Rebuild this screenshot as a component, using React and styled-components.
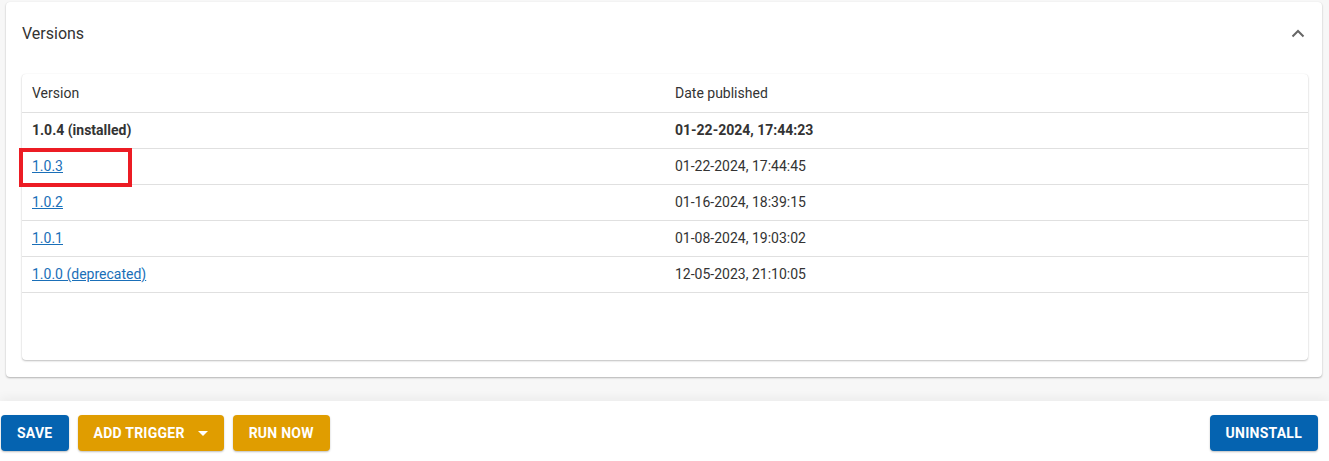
import React from 'react'
import styled, { createGlobalStyle } from 'styled-components'

const GlobalStyle = createGlobalStyle`
  html, body {
    margin: 0;
    padding: 0;
    background: #f7f7f7;
    font-family: Roboto, "Liberation Sans", Arial, sans-serif;
  }
`

const Page = styled.div`
  display: flex;
  flex-direction: column;
  width: 1329px;
  height: 461px;
  overflow: hidden;
`

const Content = styled.div`
  padding: 2px 7px 0 6px;
  height: 401px;
  flex-shrink: 0;
  box-sizing: border-box;
`

const Panel = styled.section`
  background: #fff;
  border-radius: 4px;
  box-shadow: 0 1px 2px rgba(0, 0, 0, 0.28), 0 0 1px rgba(0, 0, 0, 0.06);
  padding: 0 14px 17px 16px;
`

const PanelHeader = styled.div`
  display: flex;
  align-items: center;
  justify-content: space-between;
  height: 62px;
  padding-top: 1px;
  box-sizing: border-box;
`

const PanelTitle = styled.h2`
  margin: 0;
  font-size: 16px;
  font-weight: 400;
  color: #333;
`

const Collapse = styled.button`
  display: flex;
  align-items: center;
  justify-content: center;
  width: 24px;
  height: 24px;
  padding: 0;
  margin-right: -2px;
  border: 0;
  background: none;
  color: #666;
`

const TableCard = styled.div`
  margin-top: 10px;
  height: 286px;
  background: #fff;
  border-radius: 4px;
  box-shadow: 0 1px 2px rgba(0, 0, 0, 0.25), 0 0 1px rgba(0, 0, 0, 0.08);
`

const Table = styled.table`
  width: 100%;
  border-collapse: collapse;
  table-layout: fixed;
  font-size: 14px;
  color: #333;
`

const Th = styled.th`
  height: 38px;
  padding: 0 10px;
  text-align: left;
  font-weight: 400;
  border-bottom: 1px solid #e0e0e0;
  box-sizing: border-box;
`

const Td = styled.td`
  position: relative;
  height: 36px;
  padding: 0 10px;
  font-weight: ${({ $bold }) => ($bold ? 700 : 400)};
  border-bottom: 1px solid #e0e0e0;
  box-sizing: border-box;
`

const VersionLink = styled.a`
  color: #1a6fb8;
  text-decoration: underline;
  cursor: pointer;
`

const Highlight = styled.span`
  position: absolute;
  left: -3px;
  top: -1px;
  width: 113px;
  height: 39px;
  border: 4px solid #ec1c24;
  box-sizing: border-box;
  pointer-events: none;
`

const Footer = styled.footer`
  display: flex;
  align-items: center;
  justify-content: space-between;
  height: 60px;
  padding: 4px 11px 0 1px;
  box-sizing: border-box;
  background: #fff;
  box-shadow: 0 -3px 10px rgba(0, 0, 0, 0.05);
`

const ButtonGroup = styled.div`
  display: flex;
  gap: 9px;
`

const Button = styled.button`
  display: flex;
  align-items: center;
  gap: 13px;
  height: 36px;
  padding: 0 16px;
  border: 0;
  border-radius: 4px;
  background: ${({ $variant }) => ($variant === 'warn' ? '#e09d00' : '#0563b0')};
  color: #fff;
  font-family: Roboto, "Liberation Sans", Arial, sans-serif;
  font-size: 14px;
  font-weight: 700;
  letter-spacing: 0.25px;
  text-transform: uppercase;
  box-shadow: 0 1px 2px rgba(0, 0, 0, 0.25);
  cursor: pointer;
`

const Caret = styled.span`
  width: 0;
  height: 0;
  border-left: 5px solid transparent;
  border-right: 5px solid transparent;
  border-top: 5px solid #fff;
  margin-top: 1px;
`

const versions = [
  { name: '1.0.4 (installed)', date: '01-22-2024, 17:44:23', installed: true },
  { name: '1.0.3', date: '01-22-2024, 17:44:45', marked: true },
  { name: '1.0.2', date: '01-16-2024, 18:39:15' },
  { name: '1.0.1', date: '01-08-2024, 19:03:02' },
  { name: '1.0.0 (deprecated)', date: '12-05-2023, 21:10:05' },
]

export default function App() {
  return (
    <Page>
      <GlobalStyle />
      <Content>
        <Panel>
          <PanelHeader>
            <PanelTitle>Versions</PanelTitle>
            <Collapse aria-label="collapse">
              <svg width="14" height="9" viewBox="0 0 14 9">
                <path d="M1.5 7.5 L7 2 L12.5 7.5" fill="none" stroke="currentColor" strokeWidth="2" />
              </svg>
            </Collapse>
          </PanelHeader>
          <TableCard>
            <Table>
              <thead>
                <tr>
                  <Th>Version</Th>
                  <Th>Date published</Th>
                </tr>
              </thead>
              <tbody>
                {versions.map((v) => (
                  <tr key={v.name}>
                    <Td $bold={v.installed}>
                      {v.installed ? v.name : <VersionLink>{v.name}</VersionLink>}
                      {v.marked && <Highlight />}
                    </Td>
                    <Td $bold={v.installed}>{v.date}</Td>
                  </tr>
                ))}
              </tbody>
            </Table>
          </TableCard>
        </Panel>
      </Content>
      <Footer>
        <ButtonGroup>
          <Button>Save</Button>
          <Button $variant="warn">
            Add trigger
            <Caret />
          </Button>
          <Button $variant="warn">Run now</Button>
        </ButtonGroup>
        <Button>Uninstall</Button>
      </Footer>
    </Page>
  )
}
